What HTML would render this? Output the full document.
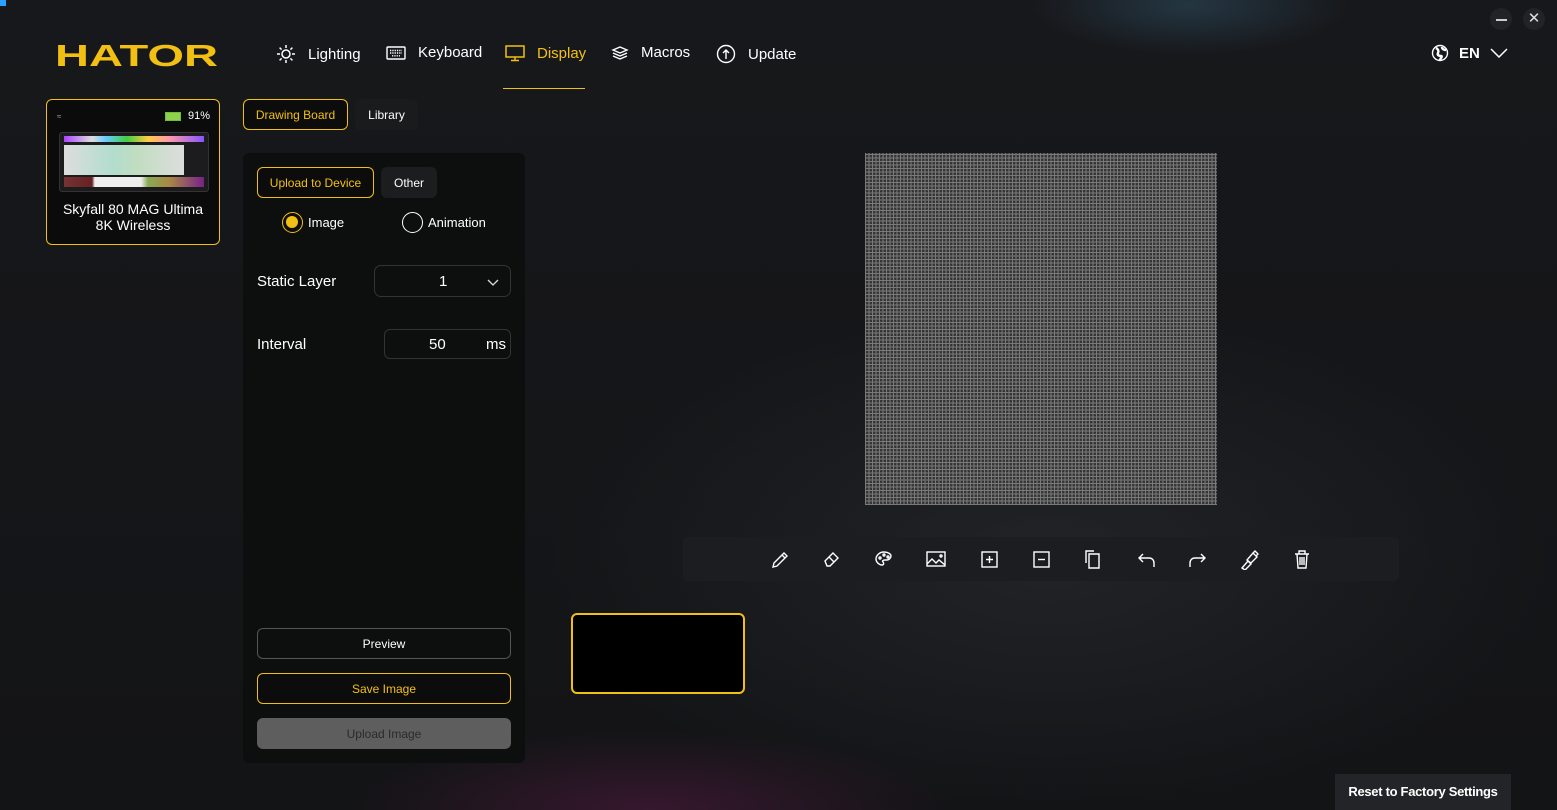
<!DOCTYPE html>
<html><head><meta charset="utf-8"><style>
*{box-sizing:border-box;margin:0;padding:0}
body{width:1557px;height:810px;overflow:hidden;font-family:"Liberation Sans",sans-serif;color:#fff;background:#141517;position:relative}
.bg{position:absolute;inset:0;background:
radial-gradient(ellipse 160px 50px at 1190px 5px,rgba(60,110,140,.35),transparent),
radial-gradient(ellipse 300px 80px at 650px 810px,rgba(120,30,90,.35),transparent),
radial-gradient(ellipse 500px 250px at 1050px 560px,rgba(50,52,58,.45),transparent),
linear-gradient(#17181b,#131416)}
.abs{position:absolute}
.nav{position:absolute;top:44px;font-size:15px;display:flex;align-items:center;gap:12px}
.btn{position:absolute;border-radius:6px;font-size:12px;display:flex;align-items:center;justify-content:center}
.yb{border:1px solid #f2c012;color:#f2c012;background:#0c0c0c}
svg{display:block}
</style></head><body>
<div class="bg"></div>
<div class="abs" style="left:0;top:0;width:6px;height:6px;background:#29a3ff"></div>
<svg class="abs" style="left:55px;top:40px" width="170" height="30"><text x="0" y="26" font-family="Liberation Sans" font-weight="bold" font-size="31" fill="#f2c012" textLength="163" lengthAdjust="spacingAndGlyphs">HATOR</text></svg>

<div class="nav" style="left:276px"><svg width="20" height="20" viewBox="0 0 20 20" fill="none" stroke="#fff" stroke-width="1.5"><circle cx="10" cy="10" r="4"/><path d="M10 1v3M10 16v3M1 10h3M16 10h3M3.6 3.6l2 2M14.4 14.4l2 2M3.6 16.4l2-2M14.4 5.6l2-2"/></svg>Lighting</div>
<div class="nav" style="left:386px"><svg width="20" height="14" viewBox="0 0 20 14" fill="none" stroke="#fff" stroke-width="1.4"><rect x="1" y="1" width="18" height="12" rx="1"/><path d="M4 4.5h12M4 7h12M6 9.8h8" stroke-dasharray="1.3 1"/></svg>Keyboard</div>
<div class="nav" style="left:505px;color:#f2c012"><svg width="20" height="18" viewBox="0 0 20 18" fill="none" stroke="#f2c012" stroke-width="1.5"><rect x="1" y="2" width="18" height="11"/><path d="M10 13v3M6 16.5h8"/></svg>Display</div>
<div class="abs" style="left:503px;top:88px;width:82px;height:1px;background:#f2c012"></div>
<div class="nav" style="left:611px"><svg width="18" height="16" viewBox="0 0 18 16" fill="none" stroke="#fff" stroke-width="1.4"><path d="M9 2l7 3-7 3-7-3z M2 8l7 3 7-3 M2 11l7 3 7-3"/></svg>Macros</div>
<div class="nav" style="left:716px"><svg width="20" height="20" viewBox="0 0 20 20" fill="none" stroke="#fff" stroke-width="1.4"><circle cx="10" cy="10" r="8.5"/><path d="M10 15V6M7 9l3-3 3 3"/></svg>Update</div>

<div class="abs" style="left:1490px;top:8px;width:22px;height:22px;border-radius:50%;background:#222326"></div>
<div class="abs" style="left:1496px;top:19px;width:11px;height:1.5px;background:#ccc"></div>
<div class="abs" style="left:1523px;top:8px;width:22px;height:22px;border-radius:50%;background:#222326;color:#ddd;font-size:15px;text-align:center;line-height:22px">✕</div>
<div class="nav" style="left:1431px;font-weight:bold;gap:10px"><svg width="18" height="18" viewBox="0 0 18 18"><circle cx="9" cy="9" r="7.5" fill="none" stroke="#fff" stroke-width="1.4"/><path d="M5 4c2 1 3 3 2 5s1 3 3 3-1 3-1 4M11 3c0 2 2 3 4 3" fill="none" stroke="#fff" stroke-width="2.5"/></svg>EN<svg width="18" height="10" viewBox="0 0 18 10" fill="none" stroke="#fff" stroke-width="1.5"><path d="M1 1l8 8 8-8"/></svg></div>

<div class="abs" style="left:46px;top:99px;width:174px;height:146px;border:1px solid #f2c012;border-radius:6px;background:#0b0b0b">
 <div class="abs" style="left:10px;top:12px;font-size:8px;color:#aaa">≈</div>
 <div class="abs" style="left:118px;top:12px;width:16px;height:9px;border:1.5px solid #6fbf3a;background:#8fd14f"></div>
 <div class="abs" style="left:141px;top:10px;font-size:11px">91%</div>
 <div class="abs" style="left:12px;top:32px;width:150px;height:60px;background:#1c1c1e;border-radius:3px;border:1px solid #333">
  <div class="abs" style="left:4px;top:3px;width:140px;height:6px;background:linear-gradient(90deg,#a4f,#ddd 20%,#6cf 30%,#4c4 45%,#fc4 60%,#f9a 75%,#85f)"></div>
  <div class="abs" style="left:4px;top:12px;width:120px;height:30px;background:linear-gradient(90deg,#fff,#cfe 40%,#dfd 60%,#fff);opacity:.85"></div>
  <div class="abs" style="left:4px;top:44px;width:140px;height:10px;background:linear-gradient(90deg,#733 0,#622 20%,#eee 22%,#eee 55%,#8a5 60%,#a84 75%,#728)"></div>
 </div>
 <div class="abs" style="left:0;top:101px;width:172px;text-align:center;font-size:14px;line-height:16px">Skyfall 80 MAG Ultima<br>8K Wireless</div>
</div>

<div class="btn yb" style="left:243px;top:99px;width:105px;height:31px">Drawing Board</div>
<div class="btn" style="left:355px;top:99px;width:63px;height:31px;background:#1a1b1d">Library</div>

<div class="abs" style="left:243px;top:153px;width:282px;height:610px;background:#0d0e0e;border-radius:6px"></div>
<div class="btn yb" style="left:257px;top:167px;width:117px;height:31px">Upload to Device</div>
<div class="btn" style="left:381px;top:167px;width:56px;height:31px;background:#1c1d1f">Other</div>
<div class="abs" style="left:282px;top:212px;width:21px;height:21px;border:1.5px solid #f2c012;border-radius:50%"><div style="margin:3px;width:12px;height:12px;border-radius:50%;background:#f2c012"></div></div>
<div class="abs" style="left:308px;top:215px;font-size:13px">Image</div>
<div class="abs" style="left:402px;top:212px;width:21px;height:21px;border:1.5px solid #fff;border-radius:50%"></div>
<div class="abs" style="left:428px;top:215px;font-size:13px">Animation</div>
<div class="abs" style="left:257px;top:273px;font-size:15px">Static Layer</div>
<div class="abs" style="left:374px;top:265px;width:137px;height:32px;border:1px solid #333;border-radius:7px"><div class="abs" style="left:64px;top:7px;font-size:15px">1</div><svg class="abs" style="left:112px;top:13px" width="12" height="7" viewBox="0 0 12 7" fill="none" stroke="#ddd" stroke-width="1.3"><path d="M1 1l5 5 5-5"/></svg></div>
<div class="abs" style="left:257px;top:336px;font-size:15px">Interval</div>
<div class="abs" style="left:384px;top:329px;width:127px;height:30px;border:1px solid #333;border-radius:6px"><div class="abs" style="left:44px;top:6px;font-size:15px">50</div><div class="abs" style="left:101px;top:6px;font-size:15px">ms</div></div>
<div class="btn" style="left:257px;top:628px;width:254px;height:31px;border:1px solid #555;background:#0d0e0e">Preview</div>
<div class="btn yb" style="left:257px;top:673px;width:254px;height:31px">Save Image</div>
<div class="btn" style="left:257px;top:718px;width:254px;height:31px;background:#5e5e5e;color:#2a2a2a">Upload Image</div>

<div class="abs" style="left:865px;top:153px;width:352px;height:352px;background-color:#353535;background-image:repeating-linear-gradient(90deg,#7a7a7a 0 1px,transparent 1px 3.5px),repeating-linear-gradient(0deg,#7a7a7a 0 1px,transparent 1px 3.5px)"></div>

<div class="abs" style="left:683px;top:537px;width:716px;height:44px;background:#1c1d20;border-radius:4px"></div>
<svg class="abs" style="left:770px;top:548px" width="540" height="22" viewBox="0 0 540 22" fill="none" stroke="#fff" stroke-width="1.4">
<path d="M3 19l1-4 10-10 3 3-10 10z M12 7l3 3"/>
<path d="M55 13l8-8 5 5-8 8h-3z M59 9l5 5"/>
<path d="M114 4c-5 0-8 4-8 7s3 6 6 6c2 0 2-2 1-3s0-2 2-2h2c2 0 4-2 4-4 0-2-3-4-7-4z"/><circle cx="110" cy="10" r="1" /><circle cx="114" cy="7" r="1"/><circle cx="118" cy="9" r="1"/>
<rect x="157" y="4" width="18" height="14"/><path d="M157 16l5-5 4 4 3-3 6 5"/><circle cx="171" cy="8" r="1"/>
<rect x="212" y="4" width="15" height="15"/><path d="M219.5 8v7M216 11.5h7"/>
<rect x="264" y="4" width="15" height="15"/><path d="M268 11.5h7"/>
<path d="M316 15V3h8M319 6h10v14h-10z"/>
<path d="M384 19v-4c0-3-2-5-5-5h-10M373 6l-4 4 4 4"/>
<path d="M420 19v-4c0-3 2-5 5-5h10M431 6l4 4-4 4"/>
<path d="M472 20l6-7 3 3-6 6z M477 12l6-7 4 4-6 6z M483 5l2-2 3 3-2 2"/>
<path d="M525 6h14M529 6V3h6v3M527 6l1 14h8l1-14M530 9v8M532 9v8M534 9v8"/>
</svg>

<div class="abs" style="left:571px;top:613px;width:174px;height:81px;border:2px solid #f2c012;border-radius:6px;background:#000"></div>

<div class="abs" style="left:1335px;top:774px;width:176px;height:36px;background:#232427;font-size:13px;font-weight:bold;text-align:center;line-height:36px;letter-spacing:-.3px">Reset to Factory Settings</div>
</body></html>
